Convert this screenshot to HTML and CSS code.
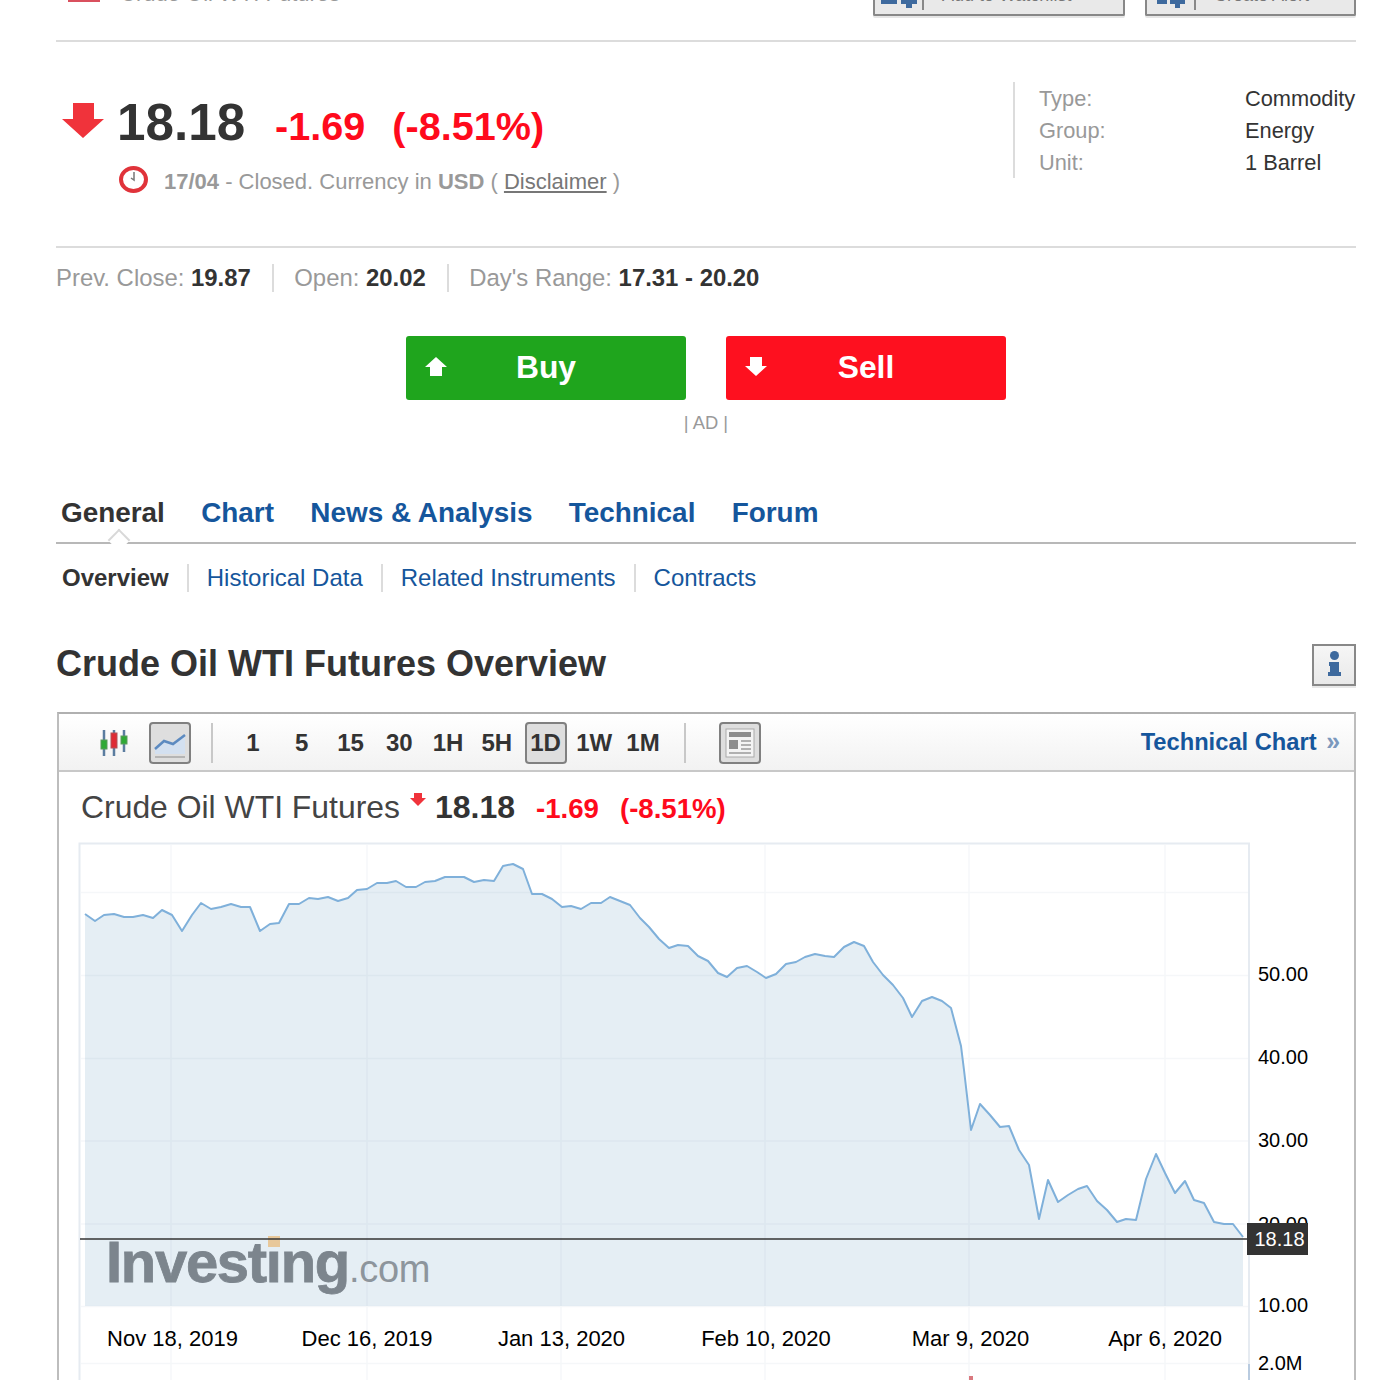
FILE: index.html
```html
<!DOCTYPE html>
<html lang="en">
<head>
<meta charset="utf-8">
<title>Crude Oil WTI Futures Overview</title>
<link rel="stylesheet" href="styles.css">
</head>
<body>
<main class="page">
  <header class="top">
    <div class="instrument"><span class="flag"></span><span class="instrument-name">Crude Oil WTI Futures</span></div>
    <div class="actions">
      <div class="action action-watch">
        <svg class="action-icon" width="36" height="12" viewBox="0 0 36 12"><path class="icon-blue" d="M0 3h16v5H0zM20 3h16v5H31v4h-6V8h-5z"/></svg>
        <span class="action-label">Add to Watchlist</span>
      </div>
      <div class="action action-alert">
        <svg class="action-icon" width="28" height="12" viewBox="0 0 28 12"><path class="icon-blue" d="M0 2h10v6H0zM13 2h15v6h-5v4h-5V8h-5z"/></svg>
        <span class="action-label">Create Alert</span>
      </div>
    </div>
  </header>

  <section class="quote">
    <div class="quote-main">
      <div class="price-row">
        <svg class="price-arrow" width="42" height="35" viewBox="0 0 42 35"><path class="arrow-red" d="M11 0h21v16h10L21 35 0 16h11z"/></svg>
        <span class="price">18.18</span>
        <span class="change">-1.69</span>
        <span class="change change-pct">(-8.51%)</span>
      </div>
      <div class="status-row">
        <svg width="29" height="27" viewBox="0 0 29 27"><ellipse class="clock-ring" cx="14.5" cy="13.5" rx="12.5" ry="11.5"/><path class="clock-hand" d="M15 6v8l-3-2"/></svg>
        <span class="status"><b>17/04</b> - Closed. Currency in <b>USD</b> ( <a class="disclaimer">Disclaimer</a> )</span>
      </div>
    </div>
    <dl class="facts">
      <dt>Type:</dt><dd>Commodity</dd>
      <dt>Group:</dt><dd>Energy</dd>
      <dt>Unit:</dt><dd>1 Barrel</dd>
    </dl>
  </section>

  <section class="stats">
    <span class="stat">Prev. Close: <b>19.87</b></span>
    <span class="stat">Open: <b>20.02</b></span>
    <span class="stat">Day's Range: <b>17.31 - 20.20</b></span>
  </section>

  <section class="trade">
    <a class="trade-btn trade-buy">
      <svg class="trade-icon" width="22" height="19" viewBox="0 0 22 19"><path class="icon-white" d="M11 0l11 10h-5v9H5v-9H0z"/></svg>
      <span class="trade-text">Buy</span>
    </a>
    <a class="trade-btn trade-sell">
      <svg class="trade-icon" width="22" height="19" viewBox="0 0 22 19"><path class="icon-white" d="M5 0h12v9h5L11 19 0 9h5z"/></svg>
      <span class="trade-text">Sell</span>
    </a>
  </section>
  <p class="ad">| AD |</p>

  <nav class="tabs">
    <a class="tab tab-active">General</a>
    <a class="tab">Chart</a>
    <a class="tab">News &amp; Analysis</a>
    <a class="tab">Technical</a>
    <a class="tab">Forum</a>
    <span class="tab-notch"></span>
  </nav>
  <nav class="subtabs">
    <a class="subtab subtab-active">Overview</a>
    <a class="subtab">Historical Data</a>
    <a class="subtab">Related Instruments</a>
    <a class="subtab">Contracts</a>
  </nav>

  <div class="overview-head">
    <h1>Crude Oil WTI Futures Overview</h1>
    <div class="info-btn">
      <svg width="13" height="25" viewBox="0 0 13 25"><circle class="icon-blue" cx="6.5" cy="4.5" r="4.5"/><path class="icon-blue" d="M1 11h10v10h2v4H0v-4h2v-6H1z"/></svg>
    </div>
  </div>

  <section class="chart-box">
    <div class="toolbar">
      <svg class="candles" width="28" height="26" viewBox="0 0 28 26">
        <path class="wick" d="M4 0v26M14 0v26M24 0v22"/>
        <rect class="candle-green" x="1" y="10" width="6" height="9"/>
        <rect class="candle-red" x="11" y="3" width="6" height="15"/>
        <rect class="candle-green" x="21" y="6" width="6" height="8"/>
      </svg>
      <span class="tool-btn tool-icon tool-line">
        <svg width="38" height="38" viewBox="0 0 38 38"><path class="mini-area" d="M4 25l9-8 9 3 12-9v19H4z"/><path class="mini-line" d="M4 25l9-8 9 3 12-9"/><path class="mini-base" d="M4 33h30"/></svg>
      </span>
      <span class="tool-sep"></span>
      <div class="periods">
        <span class="tool-btn">1</span>
        <span class="tool-btn">5</span>
        <span class="tool-btn">15</span>
        <span class="tool-btn">30</span>
        <span class="tool-btn">1H</span>
        <span class="tool-btn">5H</span>
        <span class="tool-btn tool-on">1D</span>
        <span class="tool-btn">1W</span>
        <span class="tool-btn">1M</span>
      </div>
      <span class="tool-sep tool-sep-last"></span>
      <span class="tool-btn tool-icon tool-news">
        <svg width="38" height="38" viewBox="0 0 38 38"><rect class="news-page" x="5" y="5" width="28" height="28"/><path class="news-dark" d="M8 8h22v5H8zM8 16h9v9H8z"/><path class="news-line" d="M20 17h10M20 21h10M20 25h10M8 29h22"/></svg>
      </span>
      <a class="tech-link">Technical Chart <span class="tech-arrows">»</span></a>
    </div>

    <div class="chart-title">
      <span class="chart-name">Crude Oil WTI Futures</span>
      <svg class="chart-arrow" width="16" height="13" viewBox="0 0 16 13"><path class="arrow-red" d="M4 0h8v5h4L8 13 0 5h4z"/></svg>
      <span class="chart-price">18.18</span>
      <span class="chart-change">-1.69</span>
      <span class="chart-change chart-pct">(-8.51%)</span>
    </div>

    <svg class="plot" width="1295" height="538" viewBox="59 842 1295 538">
      <path class="plot-frame" d="M79.5 1380V843.5H1249V1364"/>
      <path class="plot-axis" d="M1249 1364v16"/>
      <polygon class="area" points="85,1306 85,914 95,921 104,915 114,914 124,917 133,917 143,915 153,918 162,910 172,915 182,931 192,915 201,903 211,909 221,907 231,904 241,907 250,907 260,931 270,924 279,923 289,904 299,904 309,898 318,899 328,897 338,901 348,898 357,890 367,889 377,883 387,883 396,881 406,887 416,887 425,882 435,881 445,877 455,877 464,877 474,882 484,880 494,881 503,866 513,864 523,869 532,894 542,894 552,899 562,907 571,906 581,909 591,903 601,903 610,897 620,901 630,905 640,918 649,927 659,939 669,948 678,945 688,946 698,956 708,961 718,973 727,977 737,968 747,966 757,972 766,978 776,974 786,964 796,962 805,957 815,954 825,956 834,957 844,947 854,942 864,946 873,962 883,975 893,985 903,998 912,1017 922,1001 932,997 942,1001 951,1008 961,1046 964,1070 971,1130 980,1104 990,1115 1000,1127 1009,1126 1019,1150 1029,1165 1039,1219 1048,1180 1058,1202 1068,1195 1078,1189 1087,1186 1097,1201 1107,1210 1117,1222 1126,1219 1136,1220 1146,1179 1156,1154 1165,1173 1175,1193 1185,1181 1194,1200 1204,1203 1214,1222 1224,1224 1233,1224 1243,1237 1243,1306"/>
      <path class="grid" d="M171 845V1380M367 845V1380M561 845V1380M765 845V1380M969 845V1380M1165 845V1380M81 892.5H1248M81 975.5H1248M81 1058.5H1248M81 1141H1248M81 1224H1248M81 1306.5H1248M81 1363.5H1248"/>
      <polyline class="line" points="85,914 95,921 104,915 114,914 124,917 133,917 143,915 153,918 162,910 172,915 182,931 192,915 201,903 211,909 221,907 231,904 241,907 250,907 260,931 270,924 279,923 289,904 299,904 309,898 318,899 328,897 338,901 348,898 357,890 367,889 377,883 387,883 396,881 406,887 416,887 425,882 435,881 445,877 455,877 464,877 474,882 484,880 494,881 503,866 513,864 523,869 532,894 542,894 552,899 562,907 571,906 581,909 591,903 601,903 610,897 620,901 630,905 640,918 649,927 659,939 669,948 678,945 688,946 698,956 708,961 718,973 727,977 737,968 747,966 757,972 766,978 776,974 786,964 796,962 805,957 815,954 825,956 834,957 844,947 854,942 864,946 873,962 883,975 893,985 903,998 912,1017 922,1001 932,997 942,1001 951,1008 961,1046 964,1070 971,1130 980,1104 990,1115 1000,1127 1009,1126 1019,1150 1029,1165 1039,1219 1048,1180 1058,1202 1068,1195 1078,1189 1087,1186 1097,1201 1107,1210 1117,1222 1126,1219 1136,1220 1146,1179 1156,1154 1165,1173 1175,1193 1185,1181 1194,1200 1204,1203 1214,1222 1224,1224 1233,1224 1243,1237"/>
      <text class="logo-main" x="106" y="1282">Investing</text>
      <text class="logo-com" x="349" y="1282">.com</text>
      <rect class="logo-dot" x="268" y="1236" width="12" height="11"/>
      <g class="axis-labels">
        <text x="1258" y="981">50.00</text>
        <text x="1258" y="1064">40.00</text>
        <text x="1258" y="1147">30.00</text>
        <text x="1258" y="1231">20.00</text>
        <text x="1258" y="1312">10.00</text>
        <text x="1258" y="1370">2.0M</text>
      </g>
      <path class="price-line" d="M80 1239H1248"/>
      <rect class="price-tag" x="1247" y="1223" width="61" height="32"/>
      <text class="price-tag-text" x="1279.5" y="1246">18.18</text>
      <g class="date-labels">
        <text x="172.5" y="1346">Nov 18, 2019</text>
        <text x="367" y="1346">Dec 16, 2019</text>
        <text x="561.5" y="1346">Jan 13, 2020</text>
        <text x="766" y="1346">Feb 10, 2020</text>
        <text x="970.5" y="1346">Mar 9, 2020</text>
        <text x="1165" y="1346">Apr 6, 2020</text>
      </g>
      <rect class="vol-bar" x="969" y="1376" width="4" height="4"/>
    </svg>
  </section>
</main>
</body>
</html>
```

FILE: styles.css
```css
html, body {
  margin: 0;
  height: 1380px;
  overflow: hidden;
  background: #fff;
}

body {
  font-family: "Liberation Sans", Arial, sans-serif;
  color: #333;
}

a { color: inherit; }

.page {
  width: 1300px;
  margin-left: 56px;
}

/* Top strip */
.top {
  height: 40px;
  box-sizing: content-box;
  display: flex;
  align-items: flex-end;
  justify-content: space-between;
  border-bottom: 2px solid #dcdcdc;
}

.instrument {
  display: flex;
  align-items: flex-end;
  gap: 20px;
  margin: 0 0 38px 12px;
  height: 30px;
}

.flag {
  width: 32px;
  height: 22px;
  background: #d9505e;
}

.instrument-name {
  font-size: 22px;
  line-height: 26px;
  color: #999;
  margin-bottom: -5px;
}

.actions {
  display: flex;
  gap: 20px;
  margin-bottom: 24px;
}

.action {
  box-sizing: border-box;
  height: 42px;
  display: flex;
  align-items: flex-end;
  background: #e9e9e9;
  border: 2px solid #888;
  border-top: 0;
  box-shadow: 0 2px 0 #e6e6e6;
  border-radius: 0 0 2px 2px;
}

.action-watch { width: 252px; padding-left: 6px; }
.action-alert { width: 211px; padding-left: 10px; }

.action-icon { margin-bottom: 6px; }

.action-label {
  margin: 0 0 4px 5px;
  padding-left: 18px;
  font-size: 18px;
  line-height: 30px;
  height: 30px;
  color: #777;
  border-left: 2px solid #888;
}

.action-alert .action-label { margin-left: 9px; }

.icon-blue { fill: #3e6a9e; }
.icon-white { fill: #fff; }
.arrow-red { fill: #f0333b; }

/* Quote */
.quote {
  height: 204px;
  display: flex;
  justify-content: space-between;
  border-bottom: 2px solid #dcdcdc;
}

.quote-main { padding-top: 53px; }

.price-row {
  display: flex;
  align-items: baseline;
  height: 56px;
  line-height: 56px;
}

.price-arrow {
  align-self: flex-start;
  margin: 8px 13px 0 6px;
}

.price {
  font-size: 51.2px;
  font-weight: 700;
  color: #333;
}

.change {
  margin-left: 30px;
  font-size: 39.6px;
  font-weight: 700;
  color: #ff0a1c;
}

.change-pct { margin-left: 27px; }

.status-row {
  display: flex;
  align-items: center;
  gap: 16px;
  margin: 15px 0 0 63px;
  height: 27px;
}

.status {
  margin-top: 4px;
  font-size: 22px;
  line-height: 28px;
  color: #999;
}

.disclaimer {
  color: #777;
  text-decoration: underline;
}

.facts {
  box-sizing: border-box;
  width: 343px;
  height: 96px;
  margin: 40px 0 0;
  padding: 1px 0 0 24px;
  display: grid;
  grid-template-columns: 206px 1fr;
  grid-auto-rows: 32px;
  align-items: center;
  border-left: 2px solid #dcdcdc;
  font-size: 21.8px;
}

.facts dt { color: #999; }
.facts dd { margin: 0; color: #333; white-space: nowrap; }

.clock-ring { fill: #fff; stroke: #e0333a; stroke-width: 4; }
.clock-hand { fill: none; stroke: #777; stroke-width: 1.5; }

/* Stats */
.stats {
  display: flex;
  margin-top: 16px;
  font-size: 23.9px;
  line-height: 28px;
  color: #999;
}

.stat {
  padding-right: 21px;
  margin-right: 20.5px;
  border-right: 2px solid #dcdcdc;
}

.stat:last-child { border-right: 0; }
.stat b { color: #333; }

/* Trade buttons */
.trade {
  display: flex;
  justify-content: center;
  gap: 40px;
  margin-top: 44px;
}

.trade-btn {
  width: 280px;
  height: 64px;
  display: grid;
  grid-template-columns: 1fr auto 1fr;
  align-items: center;
  border-radius: 3px;
  color: #fff;
  font-size: 31.8px;
  font-weight: 700;
}

.trade-text { margin-top: -2px; }
.trade-icon { margin-left: 19px; margin-top: -3px; }
.trade-buy { background: #1fa51d; }
.trade-sell { background: #fe101f; }

.ad {
  margin: 13px 0 0;
  text-align: center;
  font-size: 18.4px;
  line-height: 20px;
  color: #999;
}

/* Tabs */
.tabs {
  position: relative;
  display: flex;
  gap: 36.3px;
  margin-top: 64px;
  padding: 0 0 13px 5px;
  border-bottom: 2px solid #b8b8b8;
  font-size: 27.9px;
  font-weight: 700;
  line-height: 32px;
  color: #15569c;
}

.tab-active { color: #333; }

.tab-notch {
  position: absolute;
  left: 55px;
  bottom: -6px;
  width: 16px;
  height: 16px;
  background: #fff;
  border-top: 2px solid #d8d8d8;
  border-left: 2px solid #d8d8d8;
  transform: rotate(45deg);
  box-sizing: border-box;
}

.subtabs {
  position: relative;
  display: flex;
  margin: 20px 0 0 6px;
  font-size: 24px;
  line-height: 28px;
  color: #15569c;
  background: #fff;
}

.subtab {
  padding-right: 18px;
  margin-right: 18px;
  border-right: 2px solid #dcdcdc;
}

.subtab:last-child { border-right: 0; }
.subtab-active { color: #333; font-weight: 700; }

/* Heading */
.overview-head {
  display: flex;
  align-items: flex-start;
  justify-content: space-between;
  margin-top: 52px;
  height: 42px;
}

h1 {
  margin: -1px 0 0;
  font-size: 36px;
  line-height: 42px;
  color: #333;
}

.info-btn {
  box-sizing: border-box;
  width: 44px;
  height: 42px;
  padding-bottom: 3px;
  display: flex;
  align-items: center;
  justify-content: center;
  background: linear-gradient(#f6f6f6, #e9e9e9);
  border: 2px solid #888;
  box-shadow: 0 2px 0 #e8e8e8;
}

/* Chart box */
.chart-box {
  box-sizing: border-box;
  height: 680px;
  margin: 26px 0 0 1px;
  border: 2px solid #bdbdbd;
  border-top-color: #b0b0b0;
}

.toolbar {
  box-sizing: border-box;
  height: 58px;
  padding: 1px 14px 0 41px;
  display: flex;
  align-items: center;
  background: linear-gradient(#fff, #f2f2f2);
  border-bottom: 2px solid #c8c8c8;
}

.wick { stroke: #5b7da0; stroke-width: 2.5; fill: none; }
.candle-green { fill: #2fa935; stroke: #5b9a5d; }
.candle-red { fill: #de2b35; stroke: #b05258; }

.candles { margin-right: 21px; }

.tool-btn {
  box-sizing: border-box;
  width: 42px;
  height: 42px;
  display: flex;
  align-items: center;
  justify-content: center;
  font-size: 24px;
  font-weight: 700;
  color: #333;
}

.tool-icon, .tool-on {
  background: #dedede;
  border: 2px solid #808080;
  border-radius: 4px;
}

.tool-sep {
  width: 2px;
  height: 40px;
  margin: 0 19px 0 20px;
  background: #c8c8c8;
}

.tool-sep-last { margin: 0 33px 0 20px; }

.periods {
  display: flex;
  gap: 6.75px;
}

.mini-area { fill: #d3e0f0; }
.mini-line { fill: none; stroke: #5c8ac0; stroke-width: 2.5; }
.mini-base { fill: none; stroke: #b5b5b5; stroke-width: 2; }

.news-page { fill: #f4f4f4; stroke: #aaa; }
.news-dark { fill: #8d8d8d; }
.news-line { fill: none; stroke: #9a9a9a; stroke-width: 1.6; }

.tech-link {
  margin: -2px 0 0 auto;
  font-size: 23.7px;
  font-weight: 700;
  color: #15569c;
  white-space: nowrap;
}

.tech-arrows {
  margin-left: 3px;
  font-size: 24.9px;
  color: #7b98bd;
}

.chart-title {
  box-sizing: border-box;
  height: 70px;
  padding: 0 0 0 22px;
  display: flex;
  align-items: baseline;
  line-height: 70px;
}

.chart-name {
  font-size: 31.9px;
  color: #444;
}

.chart-arrow {
  align-self: flex-start;
  margin: 21px 9px 0 10px;
}

.chart-price {
  font-size: 32px;
  font-weight: 700;
  color: #333;
}

.chart-change {
  margin-left: 21px;
  font-size: 27.6px;
  font-weight: 700;
  color: #ff0a1c;
}

/* Plot */
.plot { display: block; }
.plot-frame { fill: none; stroke: #e6ebf1; stroke-width: 2; }
.plot-axis { fill: none; stroke: #b9cbe0; stroke-width: 2; }
.area { fill: #e5eef4; }
.grid { fill: none; stroke: rgb(120 140 170 / 0.07); stroke-width: 1.5; }
.line { fill: none; stroke: #7fb0da; stroke-width: 2; stroke-linejoin: round; }

.logo-main {
  font-size: 58px;
  font-weight: 700;
  letter-spacing: -1.3px;
  fill: #7c858d;
  stroke: #7c858d;
  stroke-width: 0.8;
}

.logo-com {
  font-size: 38px;
  letter-spacing: -0.3px;
  fill: #8d959c;
}

.logo-dot { fill: #e8c89a; }

.axis-labels text {
  font-size: 20px;
  fill: #000;
}

.date-labels text {
  font-size: 22px;
  fill: #000;
  text-anchor: middle;
}

.price-line { fill: none; stroke: #333; stroke-width: 1.5; }
.price-tag { fill: #333; }

.price-tag-text {
  font-size: 20px;
  fill: #fff;
  text-anchor: middle;
}

.vol-bar { fill: #d9797f; }
```
